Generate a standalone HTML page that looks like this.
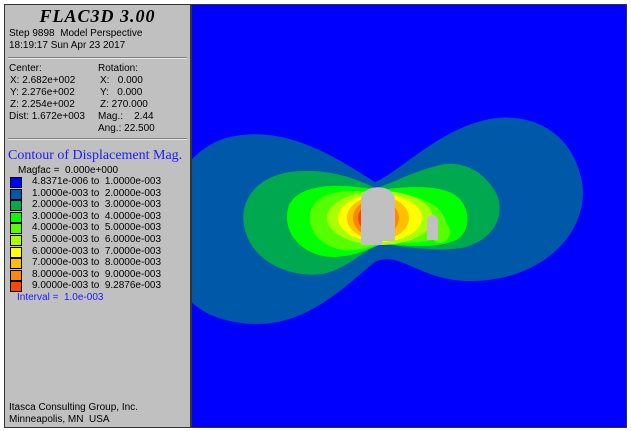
<!DOCTYPE html>
<html><head><style>
html,body{margin:0;padding:0;background:#fff;width:631px;height:431px;overflow:hidden}
#frame{position:absolute;left:4px;top:4px;width:623px;height:424px;border:1px solid #333;box-sizing:border-box;background:#0000ff}
#panel{position:absolute;left:5px;top:5px;width:185px;height:422px;background:#c0c0c0;border-right:2px solid #333;font-family:"Liberation Sans",sans-serif;font-size:10px;color:#000}
.t{position:absolute;white-space:nowrap;line-height:12px}
.hr{position:absolute;left:3px;width:179px;height:1px;background:#808080;border-bottom:1px solid #e8e8e8}
.sw{position:absolute;left:5px;width:12px;height:11px;border:1px solid #000;box-sizing:border-box}
svg{position:absolute;left:0;top:0}
</style></head><body>
<div id="frame"></div>
<svg width="631" height="431">
<defs><clipPath id="c"><rect x="192" y="5" width="434" height="422"/></clipPath></defs>
<g clip-path="url(#c)">
<path fill="#0058a8" d="M375 182 C340 160 290 126 235 136 C150 150 130 305 235 322 C300 334 340 290 375 262 C400 250 420 281 470 281 C545 281 590 230 582 182 C572 130 530 112 490 119 C440 128 400 172 375 182 Z"/>
<path fill="#00a850" d="M375 188 C350 175 320 168 290 172 C252 178 240 205 244 225 C250 262 290 278 322 274 C345 270 365 250 380 243 C400 246 430 252 462 248 C495 240 505 215 497 195 C485 170 460 160 440 165 C410 172 390 185 375 188 Z"/>
<path fill="#00ff00" d="M378 190 C340 183 300 183 289 205 C280 232 302 256 332 257 C356 257 370 248 382 244 C410 246 440 249 458 239 C472 229 470 205 455 195 C440 185 410 186 378 190 Z"/>
<path fill="#55ff00" d="M378 193 C345 188 318 192 311 210 C305 230 322 248 345 250 C362 251 372 246 384 242 C410 243 432 244 444 234 C450 224 444 210 430 203 C415 195 400 192 378 193 Z"/>
<ellipse cx="380" cy="218" rx="53" ry="27" fill="#aaff00"/>
<ellipse cx="380" cy="218" rx="42" ry="24" fill="#ffff00"/>
<ellipse cx="378" cy="218" rx="31" ry="22" fill="#ffc000"/>
<ellipse cx="376" cy="218" rx="23" ry="19" fill="#ff8800"/>
<ellipse cx="372" cy="218" rx="14" ry="14" fill="#ff4400"/>
<ellipse cx="440" cy="232" rx="10" ry="11" fill="#55ff00"/>
<path fill="#c0c0c0" d="M361 245 L361 200 C361 183 395 183 395 200 L395 241 L382 241 L382 245 Z"/>
<path fill="#c0c0c0" d="M427 240 L427 221 C427 213 438 213 438 221 L438 240 Z"/>
</g>
</svg>
<div id="panel">
<div class="t" style="left:0;width:185px;text-align:center;top:2px;font-family:'Liberation Serif',serif;font-weight:bold;font-style:italic;font-size:18px;line-height:19px;letter-spacing:1px">FLAC3D 3.00</div>
<div class="t" style="left:4px;top:23px">Step 9898&nbsp; Model Perspective</div>
<div class="t" style="left:4px;top:35px">18:19:17 Sun Apr 23 2017</div>
<div class="hr" style="top:52px"></div>
<div class="t" style="left:4px;top:58px">Center:</div>
<div class="t" style="left:5px;top:70px">X: 2.682e+002</div>
<div class="t" style="left:5px;top:82px">Y: 2.276e+002</div>
<div class="t" style="left:5px;top:94px">Z: 2.254e+002</div>
<div class="t" style="left:4px;top:106px">Dist: 1.672e+003</div>
<div class="t" style="left:93px;top:58px">Rotation:</div>
<div class="t" style="left:95px;top:70px">X:&nbsp;&nbsp; 0.000</div>
<div class="t" style="left:95px;top:82px">Y:&nbsp;&nbsp; 0.000</div>
<div class="t" style="left:95px;top:94px">Z: 270.000</div>
<div class="t" style="left:93px;top:106px">Mag.:&nbsp;&nbsp;&nbsp; 2.44</div>
<div class="t" style="left:93px;top:118px">Ang.: 22.500</div>
<div class="hr" style="top:133px"></div>
<div class="t" style="left:3px;top:143px;font-family:'Liberation Serif',serif;font-size:14px;line-height:16px;color:#1a1aff">Contour of Displacement Mag.</div>
<div class="t" style="left:13px;top:160px">Magfac =&nbsp; 0.000e+000</div>
<div class="sw" style="top:172px;background:#0000ff"></div><div class="t" style="left:27px;top:171px">4.8371e-006 to&nbsp; 1.0000e-003</div>
<div class="sw" style="top:183.6px;background:#0058a8"></div><div class="t" style="left:27px;top:182.6px">1.0000e-003 to&nbsp; 2.0000e-003</div>
<div class="sw" style="top:195.2px;background:#00a850"></div><div class="t" style="left:27px;top:194.2px">2.0000e-003 to&nbsp; 3.0000e-003</div>
<div class="sw" style="top:206.8px;background:#00ff00"></div><div class="t" style="left:27px;top:205.8px">3.0000e-003 to&nbsp; 4.0000e-003</div>
<div class="sw" style="top:218.4px;background:#55ff00"></div><div class="t" style="left:27px;top:217.4px">4.0000e-003 to&nbsp; 5.0000e-003</div>
<div class="sw" style="top:230px;background:#aaff00"></div><div class="t" style="left:27px;top:229px">5.0000e-003 to&nbsp; 6.0000e-003</div>
<div class="sw" style="top:241.6px;background:#ffff00"></div><div class="t" style="left:27px;top:240.6px">6.0000e-003 to&nbsp; 7.0000e-003</div>
<div class="sw" style="top:253.2px;background:#ffc000"></div><div class="t" style="left:27px;top:252.2px">7.0000e-003 to&nbsp; 8.0000e-003</div>
<div class="sw" style="top:264.8px;background:#ff8800"></div><div class="t" style="left:27px;top:263.8px">8.0000e-003 to&nbsp; 9.0000e-003</div>
<div class="sw" style="top:276.4px;background:#ff4400"></div><div class="t" style="left:27px;top:275.4px">9.0000e-003 to&nbsp; 9.2876e-003</div>
<div class="t" style="left:12px;top:287px;color:#1a1aff">Interval =&nbsp; 1.0e-003</div>
<div class="t" style="left:4px;top:397px">Itasca Consulting Group, Inc.</div>
<div class="t" style="left:4px;top:409px">Minneapolis, MN&nbsp; USA</div>
</div>
</body></html>
